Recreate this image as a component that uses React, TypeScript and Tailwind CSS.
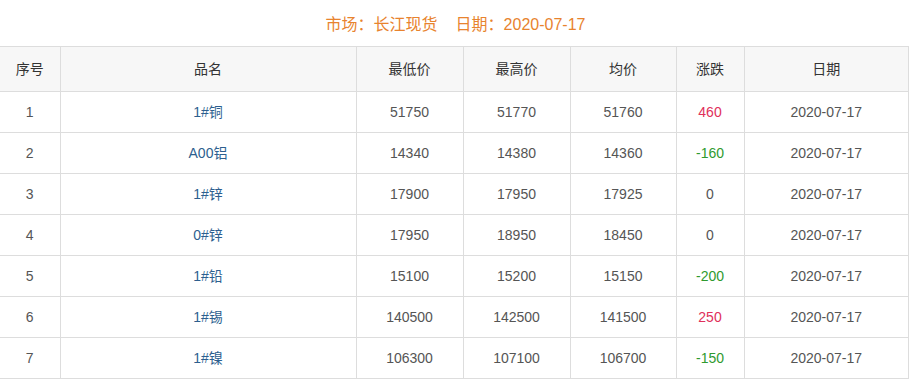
const rows = [
  { id: 1, name: "1#铜", low: "51750", high: "51770", avg: "51760", chg: "460" },
  { id: 2, name: "A00铝", low: "14340", high: "14380", avg: "14360", chg: "-160" },
  { id: 3, name: "1#锌", low: "17900", high: "17950", avg: "17925", chg: "0" },
  { id: 4, name: "0#锌", low: "17950", high: "18950", avg: "18450", chg: "0" },
  { id: 5, name: "1#铅", low: "15100", high: "15200", avg: "15150", chg: "-200" },
  { id: 6, name: "1#锡", low: "140500", high: "142500", avg: "141500", chg: "250" },
  { id: 7, name: "1#镍", low: "106300", high: "107100", avg: "106700", chg: "-150" },
];

function chgColor(v: string) {
  if (v.startsWith("-")) return "text-[#2f9a2f]";
  if (v === "0") return "text-[#555]";
  return "text-[#e0305a]";
}

export default function App() {
  return (
    <div className="w-[911px] h-[380px] overflow-hidden bg-white font-['Liberation_Sans','Noto_Sans_CJK_SC',sans-serif] text-[14px] text-[#555]">
      {/* title */}
      <div className="h-[46px] flex items-center justify-center pt-[4px] text-[16px] text-[#e8832e]">
        <span>市场：长江现货</span>
        <span className="ml-[18px]">日期：2020-07-17</span>
      </div>

      {/* table */}
      <table className="w-[909px] table-fixed border-collapse">
        <colgroup>
          <col className="w-[60px]" />
          <col className="w-[296px]" />
          <col className="w-[107px]" />
          <col className="w-[107px]" />
          <col className="w-[106px]" />
          <col className="w-[68px]" />
          <col />
        </colgroup>
        <thead>
          <tr className="h-[45px] bg-[#f7f7f7] text-[#333]">
            <th className="font-normal border-y border-[#dddddd]">序号</th>
            <th className="font-normal border border-[#dddddd]">品名</th>
            <th className="font-normal border border-[#dddddd]">最低价</th>
            <th className="font-normal border border-[#dddddd]">最高价</th>
            <th className="font-normal border border-[#dddddd]">均价</th>
            <th className="font-normal border border-[#dddddd]">涨跌</th>
            <th className="font-normal border border-[#dddddd]">日期</th>
          </tr>
        </thead>
        <tbody>
          {rows.map((r) => (
            <tr key={r.id} className="h-[41px] text-center">
              <td className="border-y border-[#dddddd]">{r.id}</td>
              <td className="border border-[#dddddd] text-[#2d5f8f]">{r.name}</td>
              <td className="border border-[#dddddd]">{r.low}</td>
              <td className="border border-[#dddddd]">{r.high}</td>
              <td className="border border-[#dddddd]">{r.avg}</td>
              <td className={`border border-[#dddddd] ${chgColor(r.chg)}`}>{r.chg}</td>
              <td className="border border-[#dddddd]">2020-07-17</td>
            </tr>
          ))}
        </tbody>
      </table>
    </div>
  );
}
